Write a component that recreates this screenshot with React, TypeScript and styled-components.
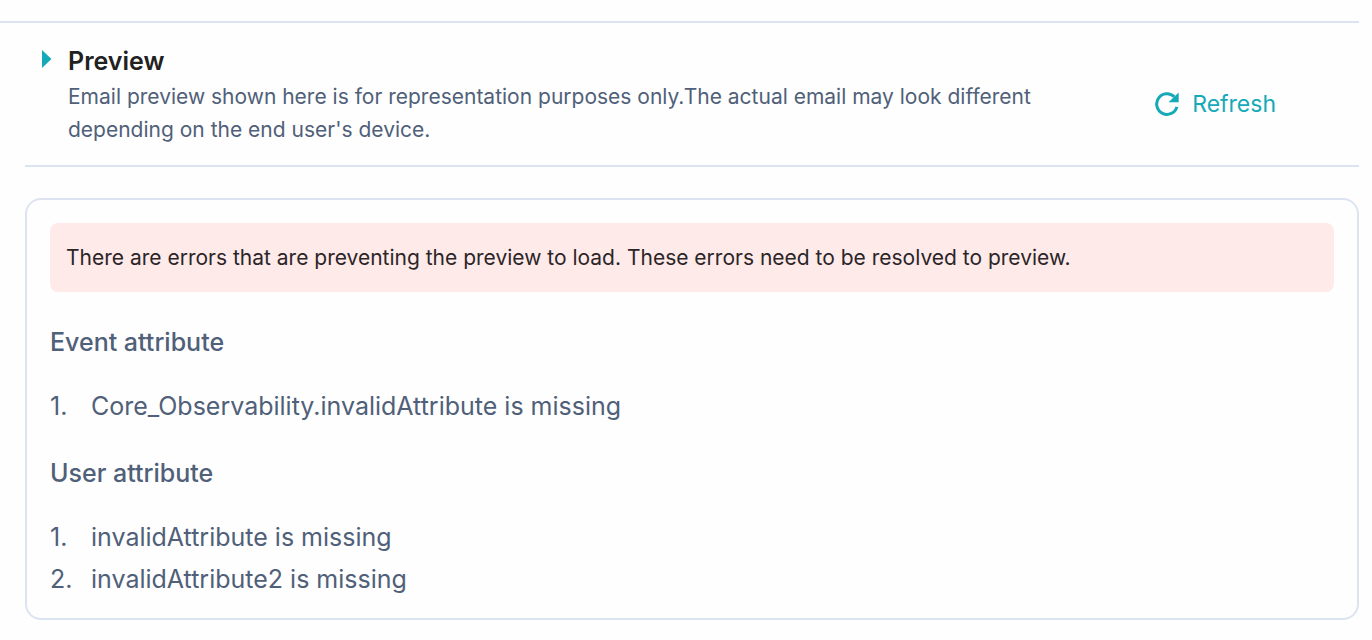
import React from "react";
import styled, { createGlobalStyle } from "styled-components";

const line = "#dce3f1";
const slate = "#506079";
const teal = "#16a9b7";

const GlobalStyle = createGlobalStyle`
  * { box-sizing: border-box; }
  body {
    margin: 0;
    background: #fefefe;
    color: ${slate};
    font-family: Inter, "Liberation Sans", sans-serif;
  }
`;

const Page = styled.main`
  margin: 21px 13px 0 0;
  border-top: 2px solid ${line};
`;

const Content = styled.div`
  padding-left: 25px;
`;

const Header = styled.header`
  display: flex;
  align-items: center;
  justify-content: space-between;
  padding: 20px 83px 19px 16px;
  border-bottom: 2px solid ${line};
`;

const Intro = styled.div`
  display: flex;
  align-items: flex-start;
`;

const Toggle = styled.button`
  display: flex;
  width: 27px;
  padding: 7px 0 0 1px;
  border: 0;
  background: none;
  cursor: pointer;
`;

const Title = styled.h2`
  margin: 0;
  color: #212121;
  font-size: 25px;
  font-weight: 600;
  line-height: 37px;
`;

const Description = styled.p`
  max-width: 1040px;
  margin: 0;
  font-size: 21px;
  line-height: 33px;
`;

const RefreshButton = styled.button`
  display: flex;
  flex-shrink: 0;
  align-items: center;
  gap: 12px;
  padding: 18px 0 0;
  border: 0;
  background: none;
  color: ${teal};
  font: inherit;
  font-size: 23px;
  line-height: 32px;
  cursor: pointer;
`;

const Card = styled.section`
  margin: 31px 0 20px;
  padding: 23px 23px 18px;
  border: 2px solid ${line};
  border-radius: 16px;
`;

const Alert = styled.p`
  margin: 0 0 30px;
  padding: 18px 16px;
  border-radius: 8px;
  background: #ffeaea;
  color: #2b2527;
  font-size: 21px;
  line-height: 33px;
`;

const Group = styled.section`
  & + & {
    margin-top: 26px;
  }
`;

const GroupTitle = styled.h3`
  margin: 0 0 23px;
  font-size: 25px;
  font-weight: 500;
  line-height: 40px;
`;

const ErrorList = styled.ol`
  margin: 0;
  padding: 0;
  list-style: none;
  counter-reset: item;
`;

const ErrorItem = styled.li`
  display: flex;
  font-size: 25px;
  line-height: 42px;
  counter-increment: item;

  &::before {
    content: counter(item) ".";
    width: 41px;
  }
`;

const groups = [
  { title: "Event attribute", errors: ["Core_Observability.invalidAttribute is missing"] },
  { title: "User attribute", errors: ["invalidAttribute is missing", "invalidAttribute2 is missing"] },
];

const CaretIcon = () => (
  <svg width="10" height="18" viewBox="0 0 10 18" fill={teal} aria-hidden="true">
    <path d="M0 0 9.500 9 0 18Z" />
  </svg>
);

const RefreshIcon = () => (
  <svg width="26" height="26" viewBox="0 0 26 26" fill="none" aria-hidden="true">
    <path d="M22.900 15.800A10.300 10.300 0 1 1 20.300 5.800" stroke={teal} strokeWidth="3" />
    <path d="M24.700 1.500V11.300H14.500Z" fill={teal} />
  </svg>
);

export default function App() {
  return (
    <>
      <GlobalStyle />
      <Page>
        <Content>
          <Header>
            <Intro>
              <Toggle type="button" aria-label="Toggle preview">
                <CaretIcon />
              </Toggle>
              <div>
                <Title>Preview</Title>
                <Description>
                  Email preview shown here is for representation purposes only.The actual email may look
                  different depending on the end user's device.
                </Description>
              </div>
            </Intro>
            <RefreshButton type="button">
              <RefreshIcon />
              Refresh
            </RefreshButton>
          </Header>
          <Card>
            <Alert role="alert">
              There are errors that are preventing the preview to load. These errors need to be resolved to
              preview.
            </Alert>
            {groups.map((group) => (
              <Group key={group.title}>
                <GroupTitle>{group.title}</GroupTitle>
                <ErrorList>
                  {group.errors.map((error) => (
                    <ErrorItem key={error}>{error}</ErrorItem>
                  ))}
                </ErrorList>
              </Group>
            ))}
          </Card>
        </Content>
      </Page>
    </>
  );
}
